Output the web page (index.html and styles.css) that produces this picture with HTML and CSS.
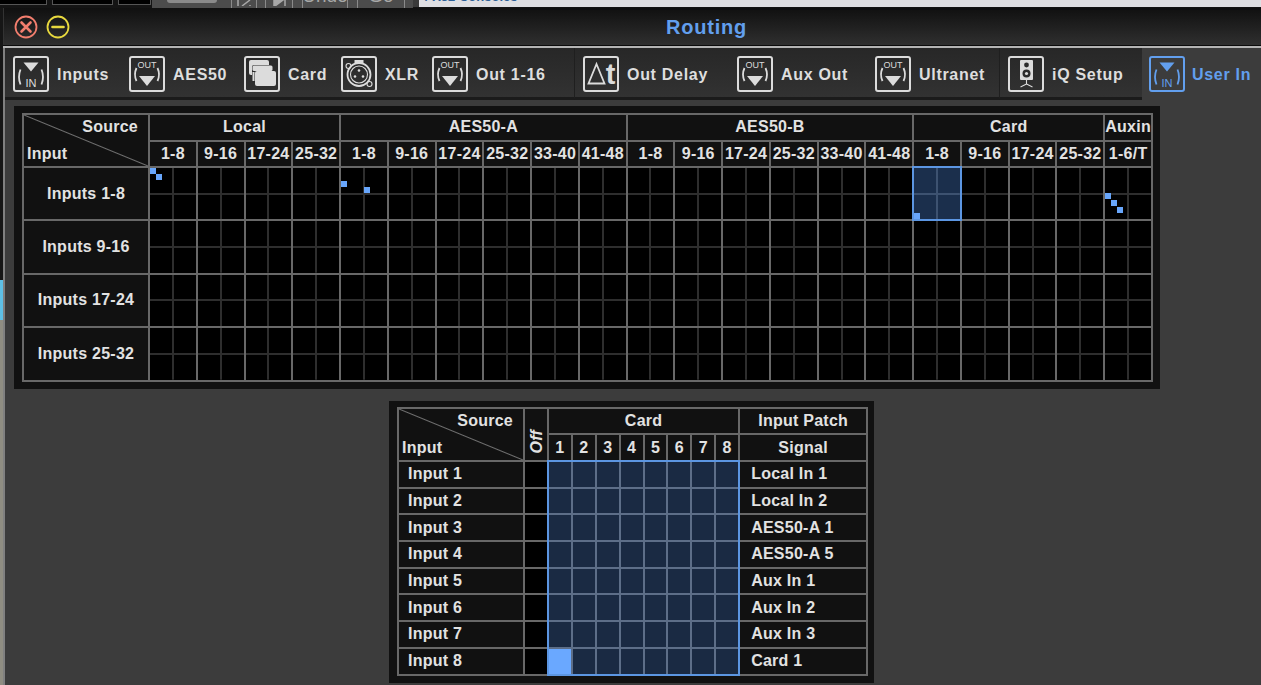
FILE: index.html
```html
<!DOCTYPE html>
<html lang="en">
<head>
<meta charset="utf-8">
<title>Routing</title>
<link rel="stylesheet" href="styles.css">
</head>
<body>
<svg class="defs" width="0" height="0" aria-hidden="true">
  <symbol id="i-in" viewBox="0 0 36 36">
    <rect x="1" y="1" width="34" height="34" rx="2" class="ib"/>
    <path d="M10.500 6.500h15l-7.500 9z" class="if"/>
    <path d="M7.500 13.500q-3 7.500 0 15M28.500 13.500q3 7.500 0 15" class="il"/>
  </symbol>
  <symbol id="i-out" viewBox="0 0 36 36">
    <rect x="1" y="1" width="34" height="34" rx="2" class="ib"/>
    <path d="M10 20h16l-8 10z" class="if"/>
    <path d="M7.500 12q-3 6.500 0 13M28.500 12q3 6.500 0 13" class="il"/>
  </symbol>
  <symbol id="i-card" viewBox="0 0 36 36">
    <rect x="1" y="1" width="34" height="34" rx="2" class="ib"/>
    <rect x="5" y="4" width="20" height="15" rx="2" class="if"/>
    <rect x="8" y="9" width="22" height="17" rx="2" class="ik"/>
    <rect x="11" y="15" width="21" height="15" rx="2" class="if"/>
    <rect x="8.500" y="9.500" width="20" height="5.500" rx="1.500" class="if"/>
    <rect x="8.500" y="16" width="2" height="9" class="if"/>
  </symbol>
  <symbol id="i-xlr" viewBox="0 0 36 36">
    <rect x="1" y="1" width="34" height="34" rx="2" class="ib"/>
    <path d="M13.500 7v-3h9v3z" class="if"/>
    <circle cx="18" cy="18.500" r="11.500" class="il"/>
    <circle cx="18" cy="18.500" r="8.500" class="il1"/>
    <circle cx="7.500" cy="10" r="2.500" class="il1"/>
    <circle cx="28.500" cy="28" r="2.500" class="il1"/>
    <circle cx="18" cy="14.500" r="1.300" class="if"/>
    <circle cx="14" cy="20.500" r="1.300" class="if"/>
    <circle cx="22" cy="20.500" r="1.300" class="if"/>
  </symbol>
  <symbol id="i-delay" viewBox="0 0 36 36">
    <rect x="1" y="1" width="34" height="34" rx="2" class="ib"/>
    <path d="M13.500 8l-8 19.500h16z" class="il"/>
  </symbol>
  <symbol id="i-iq" viewBox="0 0 36 36">
    <rect x="1" y="1" width="34" height="34" rx="2" class="ib"/>
    <rect x="12" y="4" width="13" height="20" rx="1" class="if"/>
    <circle cx="18.500" cy="9" r="2.400" class="ic"/>
    <circle cx="18.500" cy="17.500" r="4" class="ic"/>
    <circle cx="18.500" cy="17.500" r="1.600" class="if"/>
    <path d="M18.500 24v4M18.500 28l-6 3M18.500 28l6 3" class="il1"/>
  </symbol>
</svg>

<div class="topstrip">
  <div class="slot s1"></div>
  <div class="slot s2"></div>
  <div class="slot s3"></div>
  <div class="toolbar">
    <div class="pill"></div>
    <div class="tb tb1"><svg width="24" height="6" viewBox="0 0 24 6"><path d="M6 0v6M18 0l-8 6M18 6v-1" class="tbi"/></svg></div>
    <div class="tb tb2"><svg width="26" height="6" viewBox="0 0 26 6"><path d="M8 0v6h1l8-6zM19 0v6" class="tbi"/></svg></div>
    <div class="tb tb3"><span>Undo</span></div>
    <div class="tb tb4"><span>Go</span></div>
  </div>
  <div class="webpage"><span>/ X32 Consoles</span></div>
</div>

<div class="stage">
  <div class="edge">
    <div class="e-dark"></div>
    <div class="e-blue"></div>
    <div class="e-tan"></div>
  </div>
  <div class="window">
    <header class="titlebar">
      <svg class="wbtn" width="24" height="24" viewBox="0 0 24 24"><circle cx="12" cy="12" r="10.500" class="close"/><path d="M7.500 7.500l9 9M16.500 7.500l-9 9" class="close x"/></svg>
      <svg class="wbtn" width="24" height="24" viewBox="0 0 24 24"><circle cx="12" cy="12" r="10.500" class="min"/><path d="M6.500 12h11" class="min x"/></svg>
      <h1 class="title">Routing</h1>
    </header>
    <div class="rule"></div>
    <div class="winbody">
      <nav class="tabs">
        <div class="tab"><svg class="ico" viewBox="0 0 36 36"><use href="#i-in"/><text x="18" y="30.500" class="it it11">IN</text></svg><span>Inputs</span></div>
        <div class="tab"><svg class="ico" viewBox="0 0 36 36"><use href="#i-out"/><text x="18" y="12.300" class="it it9">OUT</text></svg><span>AES50</span></div>
        <div class="tab"><svg class="ico" viewBox="0 0 36 36"><use href="#i-card"/></svg><span>Card</span></div>
        <div class="tab"><svg class="ico" viewBox="0 0 36 36"><use href="#i-xlr"/></svg><span>XLR</span></div>
        <div class="tab sep"><svg class="ico" viewBox="0 0 36 36"><use href="#i-out"/><text x="18" y="12.300" class="it it9">OUT</text></svg><span>Out 1-16</span></div>
        <div class="tab"><svg class="ico" viewBox="0 0 36 36"><use href="#i-delay"/><text x="27.500" y="28" class="it itt">t</text></svg><span>Out Delay</span></div>
        <div class="tab"><svg class="ico" viewBox="0 0 36 36"><use href="#i-out"/><text x="18" y="12.300" class="it it9">OUT</text></svg><span>Aux Out</span></div>
        <div class="tab sep"><svg class="ico" viewBox="0 0 36 36"><use href="#i-out"/><text x="18" y="12.300" class="it it9">OUT</text></svg><span>Ultranet</span></div>
        <div class="tab"><svg class="ico" viewBox="0 0 36 36"><use href="#i-iq"/></svg><span>iQ Setup</span></div>
        <div class="tab active"><svg class="ico" viewBox="0 0 36 36"><use href="#i-in"/><text x="18" y="30.500" class="it it11">IN</text></svg><span>User In</span></div>
      </nav>
      <main class="content">
        <section class="panel panel-top">
          <div class="routing">
            <div class="corner"><span class="src">Source</span><span class="inp">Input</span></div>
            <div class="h g span4">Local</div>
            <div class="h g span6">AES50-A</div>
            <div class="h g span6">AES50-B</div>
            <div class="h g span4">Card</div>
            <div class="h g">Auxin</div>

            <div class="h">1-8</div><div class="h">9-16</div><div class="h">17-24</div><div class="h">25-32</div>
            <div class="h">1-8</div><div class="h">9-16</div><div class="h">17-24</div><div class="h">25-32</div><div class="h">33-40</div><div class="h">41-48</div>
            <div class="h">1-8</div><div class="h">9-16</div><div class="h">17-24</div><div class="h">25-32</div><div class="h">33-40</div><div class="h">41-48</div>
            <div class="h">1-8</div><div class="h">9-16</div><div class="h">17-24</div><div class="h">25-32</div>
            <div class="h">1-6/T</div>

            <div class="h">Inputs 1-8</div>
            <div class="m"><i class="d d00"></i><i class="d d11"></i></div><div class="m"></div><div class="m"></div><div class="m"></div>
            <div class="m"><i class="d d20"></i><i class="d d34"></i></div><div class="m"></div><div class="m"></div><div class="m"></div><div class="m"></div><div class="m"></div>
            <div class="m"></div><div class="m"></div><div class="m"></div><div class="m"></div><div class="m"></div><div class="m"></div>
            <div class="m sel"><i class="d d70"></i></div><div class="m"></div><div class="m"></div><div class="m"></div>
            <div class="m"><i class="d d40"></i><i class="d d51"></i><i class="d d62"></i></div>

            <div class="h">Inputs 9-16</div>
            <div class="m"></div><div class="m"></div><div class="m"></div><div class="m"></div>
            <div class="m"></div><div class="m"></div><div class="m"></div><div class="m"></div><div class="m"></div><div class="m"></div>
            <div class="m"></div><div class="m"></div><div class="m"></div><div class="m"></div><div class="m"></div><div class="m"></div>
            <div class="m"></div><div class="m"></div><div class="m"></div><div class="m"></div>
            <div class="m"></div>

            <div class="h">Inputs 17-24</div>
            <div class="m"></div><div class="m"></div><div class="m"></div><div class="m"></div>
            <div class="m"></div><div class="m"></div><div class="m"></div><div class="m"></div><div class="m"></div><div class="m"></div>
            <div class="m"></div><div class="m"></div><div class="m"></div><div class="m"></div><div class="m"></div><div class="m"></div>
            <div class="m"></div><div class="m"></div><div class="m"></div><div class="m"></div>
            <div class="m"></div>

            <div class="h">Inputs 25-32</div>
            <div class="m"></div><div class="m"></div><div class="m"></div><div class="m"></div>
            <div class="m"></div><div class="m"></div><div class="m"></div><div class="m"></div><div class="m"></div><div class="m"></div>
            <div class="m"></div><div class="m"></div><div class="m"></div><div class="m"></div><div class="m"></div><div class="m"></div>
            <div class="m"></div><div class="m"></div><div class="m"></div><div class="m"></div>
            <div class="m"></div>
          </div>
        </section>

        <section class="panel panel-user">
          <div class="userin">
            <div class="corner corner-u"><span class="src">Source</span><span class="inp">Input</span></div>
            <div class="h off"><span>Off</span></div>
            <div class="h span8">Card</div>
            <div class="h">Input Patch</div>
            <div class="h">1</div><div class="h">2</div><div class="h">3</div><div class="h">4</div><div class="h">5</div><div class="h">6</div><div class="h">7</div><div class="h">8</div>
            <div class="h">Signal</div>

            <div class="matrix">
              <b></b><b></b><b></b><b></b><b></b><b></b><b></b><b></b>
              <b></b><b></b><b></b><b></b><b></b><b></b><b></b><b></b>
              <b></b><b></b><b></b><b></b><b></b><b></b><b></b><b></b>
              <b></b><b></b><b></b><b></b><b></b><b></b><b></b><b></b>
              <b></b><b></b><b></b><b></b><b></b><b></b><b></b><b></b>
              <b></b><b></b><b></b><b></b><b></b><b></b><b></b><b></b>
              <b></b><b></b><b></b><b></b><b></b><b></b><b></b><b></b>
              <b class="on"></b><b></b><b></b><b></b><b></b><b></b><b></b><b></b>
            </div>

            <div class="l lab">Input 1</div><div class="blk"></div><div class="l pat">Local In 1</div>
            <div class="l lab">Input 2</div><div class="blk"></div><div class="l pat">Local In 2</div>
            <div class="l lab">Input 3</div><div class="blk"></div><div class="l pat">AES50-A 1</div>
            <div class="l lab">Input 4</div><div class="blk"></div><div class="l pat">AES50-A 5</div>
            <div class="l lab">Input 5</div><div class="blk"></div><div class="l pat">Aux In 1</div>
            <div class="l lab">Input 6</div><div class="blk"></div><div class="l pat">Aux In 2</div>
            <div class="l lab">Input 7</div><div class="blk"></div><div class="l pat">Aux In 3</div>
            <div class="l lab">Input 8</div><div class="blk"></div><div class="l pat">Card 1</div>
          </div>
        </section>
      </main>
    </div>
  </div>
</div>
</body>
</html>
```
FILE: styles.css
```css
* { box-sizing: border-box; }
html, body { margin: 0; padding: 0; }
body {
  width: 1261px;
  height: 685px;
  overflow: hidden;
  display: flex;
  flex-direction: column;
  background: #1a1a1a;
  font-family: "Liberation Sans", Arial, sans-serif;
  font-weight: 700;
  color: #e2e2e2;
}
.defs { position: absolute; }

/* what shows behind the window */
.topstrip { height: 8px; flex: none; display: flex; background: #141414; }
.slot { height: 5px; background: #000; border-bottom: 1px solid #555; border-right: 1px solid #555; }
.s1 { width: 47px; margin-right: 5px; }
.s2 { width: 61px; margin-right: 5px; border-left: 1px solid #555; }
.s3 { width: 33px; margin-right: 1px; border-left: 1px solid #555; }
.toolbar { width: 261px; display: flex; background: #4c4c4c; }
.pill { width: 50px; height: 3px; margin-left: 15px; background: #8a8a8a; border-radius: 0 0 4px 4px; }
.tb { height: 8px; border: 1px solid #8a8a8a; border-width: 0 1px; display: flex; justify-content: center; align-items: flex-end; overflow: hidden; font-size: 19px; font-weight: 400; line-height: 16px; color: #a8a8a8; }
.tb span { margin-bottom: 4px; white-space: nowrap; }
.tb svg { margin-bottom: 2px; flex: none; }
.tbi { fill: #a8a8a8; stroke: #a8a8a8; stroke-width: 1.500; }
.tb1 { width: 26px; margin-left: 14px; }
.tb2 { width: 28px; margin-left: 8px; }
.tb3 { width: 46px; margin-left: 9px; }
.tb4 { width: 48px; margin-left: 9px; }
.webpage { flex: 1; background: #dfdfe3; height: 7px; border-left: 6px solid #3a3a3a; display: flex; align-items: flex-end; overflow: hidden; padding-left: 6px; font-size: 13px; line-height: 14px; color: #2c5f96; }
.webpage span { margin-bottom: 3px; white-space: nowrap; }

.stage { flex: 1; display: flex; min-height: 0; }
.edge { width: 3px; flex: none; display: flex; flex-direction: column; }
.e-dark { height: 272px; background: #161616; }
.e-blue { height: 40px; background: #5ec0e6; }
.e-tan { flex: 1; background: #8f8d82; }

.window { flex: 1; min-width: 0; display: flex; flex-direction: column; }
.titlebar {
  height: 37px;
  flex: none;
  display: flex;
  align-items: center;
  padding-left: 10px;
  gap: 8px;
  background: linear-gradient(#101010, #2f2f2f);
  border-left: 1px solid #333;
}
.wbtn { flex: none; }
.close, .min { fill: none; stroke-width: 1.800; }
.close { stroke: #f27e6e; }
.min { stroke: #e8d93e; }
.x { stroke-width: 2.600; stroke-linecap: round; }
.title { margin: 0 0 0 588px; font-size: 20px; font-weight: 700; letter-spacing: .8px; color: #629fee; line-height: 24px; }
.rule { height: 3px; flex: none; background: #b4b4b4; border-top: 1px solid #0c0c0c; }

.winbody { flex: 1; min-height: 0; display: flex; flex-direction: column; background: #3c3c3c; border-left: 2px solid #808080; }
.tabs { height: 52px; flex: none; display: grid; grid-template-columns: 116px 115px 97px 91px 151px 154px 138px 133px 142px 1fr; }
.tab {
  display: flex;
  align-items: flex-start;
  gap: 8px;
  padding: 8px 0 0 8px;
  background: linear-gradient(#272727, #323232);
  border-bottom: 3px solid #1b1b1b;
  font-size: 16px;
  letter-spacing: .7px;
  color: #dedede;
}
.tab span { line-height: 38px; white-space: nowrap; }
.sep { border-right: 1px solid #1f1f1f; }
.active { background: #3c3c3c; border-bottom: 0; border-top-left-radius: 6px; padding-left: 7px; margin-top: 1px; padding-top: 7px; gap: 7px; color: #629fee; }
.ico { width: 36px; height: 36px; flex: none; color: #dcdcdc; }
.active .ico { color: #629fee; }
.ib { fill: none; stroke: currentColor; stroke-width: 2; }
.il { fill: none; stroke: currentColor; stroke-width: 1.800; }
.il1 { fill: none; stroke: currentColor; stroke-width: 1.100; }
.if { fill: currentColor; }
.ik { fill: #2c2c2c; }
.ic { fill: #2c2c2c; }
.it { fill: currentColor; text-anchor: middle; font-family: "Liberation Sans", Arial, sans-serif; font-weight: 400; letter-spacing: 0; }
.it9 { font-size: 9px; }
.it11 { font-size: 11px; }
.itt { font-size: 29px; font-weight: 700; }

.content { flex: 1; min-height: 0; padding: 6px 0 0 9px; }
.panel { background: #111; }
.panel-top { width: 1146px; height: 283px; padding: 7px 8px; }
.panel-user { width: 485px; height: 282px; margin: 12px 0 0 375px; padding: 6px 8px; }

/* shared grid cells */
.routing, .userin {
  display: grid;
  gap: 2px;
  padding: 2px;
  background: #686868;
  font-size: 16px;
  letter-spacing: .25px;
}
.routing {
  width: 1131px;
  grid-template-columns: 124px repeat(21, 1fr);
  grid-template-rows: 25px 24px repeat(4, 51.4px);
}
.userin {
  width: 471px;
  grid-template-columns: 124px 22px repeat(8, 21.9px) 126px;
  grid-template-rows: 24px 25px repeat(8, 24.7px);
}
.h { background: #111; display: flex; align-items: center; justify-content: center; white-space: nowrap; }
.g { padding-bottom: 2px; }
.span4 { grid-column: span 4; }
.span6 { grid-column: span 6; }
.span8 { grid-column: span 8; }
.corner {
  grid-row: span 2;
  display: flex;
  flex-direction: column;
  justify-content: space-between;
  padding: 3px 10px 4px 3px;
  background:
    linear-gradient(to top right, transparent calc(50% - 1px), #707070 50%, transparent calc(50% + 1px)),
    #111;
  line-height: 17px;
}
.src { align-self: flex-end; }
.inp { align-self: flex-start; }
.m {
  display: grid;
  grid-template-columns: repeat(8, 1fr);
  grid-template-rows: repeat(8, 1fr);
  background:
    linear-gradient(#2e2e2e, #2e2e2e) center / 2px 100% no-repeat,
    linear-gradient(#2e2e2e, #2e2e2e) center / 100% 2px no-repeat,
    #000;
}
.sel {
  box-shadow: 0 0 0 2px #5c96e2;
  background:
    linear-gradient(#3d5270, #3d5270) center / 2px 100% no-repeat,
    linear-gradient(#3d5270, #3d5270) center / 100% 2px no-repeat,
    #1b2f4c;
}
.d { width: 6px; height: 6px; background: #68a6fb; }
.d00 { grid-area: 1 / 1; }
.d11 { grid-area: 2 / 2; }
.d20 { grid-area: 3 / 1; }
.d34 { grid-area: 4 / 5; }
.d70 { grid-area: 8 / 1; }
.d40 { grid-area: 5 / 1; margin-top: 1px; }
.d51 { grid-area: 6 / 2; margin-top: 1px; }
.d62 { grid-area: 7 / 3; margin-top: 1px; }

.off { grid-column: 2; grid-row: 1 / span 2; align-items: flex-end; padding-bottom: 6px; padding-left: 1px; }
.off span { writing-mode: vertical-rl; transform: rotate(180deg); font-style: italic; font-size: 16px; line-height: 18px; }
.matrix {
  grid-column: 3 / 11;
  grid-row: 3 / 11;
  display: grid;
  grid-template-columns: repeat(8, 21.9px);
  grid-template-rows: repeat(8, 24.7px);
  gap: 2px;
  background: #5d6e88;
  box-shadow: 0 0 0 2px #5c96e2;
  position: relative;
}
.matrix b { background: #1a2a43; }
.matrix .on { background: #6aa8ff; }
.l { background: #111; display: flex; align-items: center; white-space: nowrap; }
.lab { grid-column: 1; padding-left: 9px; }
.pat { grid-column: 11; padding-left: 11px; }
.blk { grid-column: 2; background: #000; }
```
